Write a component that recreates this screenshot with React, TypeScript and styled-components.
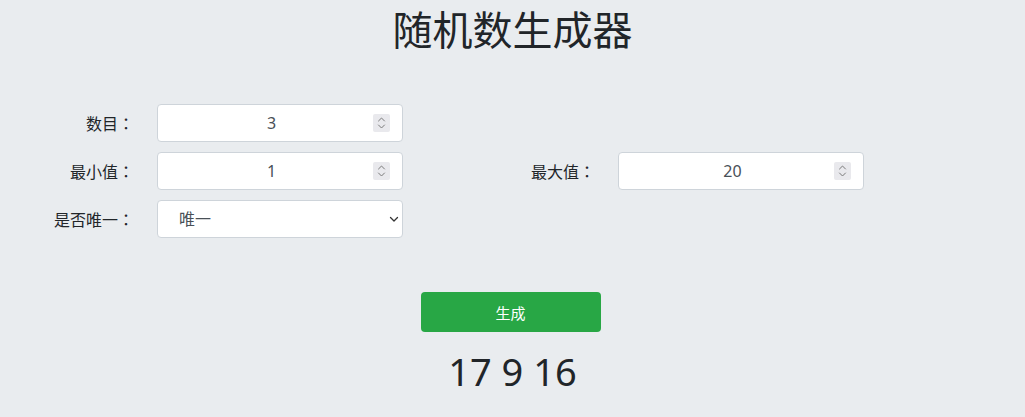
import React, { useState } from "react";
import styled, { createGlobalStyle } from "styled-components";

const GlobalStyle = createGlobalStyle`
  html, body {
    margin: 0;
    padding: 0;
    background: #e9ecef;
  }
  body {
    font-family: "Noto Sans", "Noto Sans CJK SC", sans-serif;
    color: #212529;
  }
  input[type="number"]::-webkit-inner-spin-button,
  input[type="number"]::-webkit-outer-spin-button {
    -webkit-appearance: none;
    margin: 0;
  }
`;

const Page = styled.div`
  display: flex;
  flex-direction: column;
  align-items: stretch;
  padding-top: 6px;
`;

const Title = styled.h1`
  margin: 0;
  text-align: center;
  font-size: 40px;
  font-weight: 400;
  line-height: 48px;
  color: #212529;
`;

const Form = styled.div`
  display: grid;
  grid-template-columns: 134px 246px 169px 246px;
  column-gap: 23px;
  row-gap: 10px;
  margin-top: 50px;
`;

const Label = styled.label`
  align-self: center;
  text-align: right;
  font-size: 16px;
  line-height: 24px;
  color: #212529;
  white-space: nowrap;
`;

const Colon = styled.span`
  font-family: "Noto Sans CJK JP", sans-serif;
`;

const FieldWrap = styled.div`
  position: relative;
  height: 38px;
`;

const NumberInput = styled.input`
  box-sizing: border-box;
  width: 100%;
  height: 38px;
  border: 1px solid #ced4da;
  border-radius: 4px;
  background: #fff;
  text-align: center;
  font-family: "Noto Sans", "Noto Sans CJK SC", sans-serif;
  font-size: 16px;
  color: #495057;
  padding: 0 29px 0 12px;
  outline: none;
  -moz-appearance: textfield;
`;

const Spinner = styled.span`
  position: absolute;
  right: 13px;
  top: 10px;
  width: 17px;
  height: 18px;
  background: #e9e9ed;
  border-radius: 2px;
  pointer-events: none;
  display: flex;
  align-items: center;
  justify-content: center;
`;

const Select = styled.select`
  box-sizing: border-box;
  width: 100%;
  height: 38px;
  border: 1px solid #ced4da;
  border-radius: 4px;
  background: #fff;
  font-family: "Noto Sans", "Noto Sans CJK SC", sans-serif;
  font-size: 16px;
  color: #495057;
  padding: 0 30px 0 21px;
  appearance: none;
  -webkit-appearance: none;
  outline: none;
`;

const Chevron = styled.span`
  position: absolute;
  right: 4px;
  top: 15px;
  width: 10px;
  height: 8px;
  pointer-events: none;
  display: flex;
`;

const Actions = styled.div`
  display: flex;
  flex-direction: column;
  align-items: center;
  margin-top: 54px;
`;

const GenerateButton = styled.button`
  width: 180px;
  height: 40px;
  margin-right: 4px;
  border: none;
  border-radius: 4px;
  background: #28a745;
  color: #fff;
  font-family: "Noto Sans", "Noto Sans CJK SC", sans-serif;
  font-size: 15px;
  cursor: pointer;
`;

const Result = styled.div`
  margin-top: 16px;
  font-size: 38px;
  line-height: 46px;
  color: #212529;
  text-align: center;
`;

const SpinIcon = () => (
  <svg width="9" height="14" viewBox="0 0 9 14" fill="none" stroke="#7a7a7a" strokeWidth="1" strokeLinecap="round" strokeLinejoin="round">
    <path d="M1.5 5 L4.5 2 L7.5 5" />
    <path d="M1.5 9 L4.5 12 L7.5 9" />
  </svg>
);

const DownIcon = () => (
  <svg width="10" height="8" viewBox="0 0 10 8" fill="none" stroke="#333" strokeWidth="1.3" strokeLinecap="round" strokeLinejoin="round">
    <path d="M1.5 2.5 L5 6 L8.5 2.5" />
  </svg>
);

const NumberField = ({ value, onChange }: { value: number; onChange: (v: number) => void }) => (
  <FieldWrap>
    <NumberInput type="number" value={value} onChange={(e) => onChange(Number(e.target.value))} />
    <Spinner>
      <SpinIcon />
    </Spinner>
  </FieldWrap>
);

const FieldLabel = ({ text }: { text: string }) => (
  <Label>
    {text}
    <Colon>：</Colon>
  </Label>
);

const Empty = styled.div``;

export default function App() {
  const [count, setCount] = useState(3);
  const [min, setMin] = useState(1);
  const [max, setMax] = useState(20);
  const [unique, setUnique] = useState("unique");
  const [result, setResult] = useState<number[]>([17, 9, 16]);

  const generate = () => {
    const lo = Math.min(min, max);
    const hi = Math.max(min, max);
    const out: number[] = [];
    const range = hi - lo + 1;
    const n = unique === "unique" ? Math.min(count, range) : count;
    while (out.length < n) {
      const v = lo + Math.floor(Math.random() * range);
      if (unique === "unique" && out.includes(v)) continue;
      out.push(v);
    }
    setResult(out);
  };

  return (
    <>
      <GlobalStyle />
      <Page>
        <Title>随机数生成器</Title>
        <Form>
          <FieldLabel text="数目" />
          <NumberField value={count} onChange={setCount} />
          <Empty />
          <Empty />

          <FieldLabel text="最小值" />
          <NumberField value={min} onChange={setMin} />
          <FieldLabel text="最大值" />
          <NumberField value={max} onChange={setMax} />

          <FieldLabel text="是否唯一" />
          <FieldWrap>
            <Select value={unique} onChange={(e) => setUnique(e.target.value)}>
              <option value="unique">唯一</option>
              <option value="repeat">可重复</option>
            </Select>
            <Chevron>
              <DownIcon />
            </Chevron>
          </FieldWrap>
        </Form>
        <Actions>
          <GenerateButton onClick={generate}>生成</GenerateButton>
          <Result>{result.join(" ")}</Result>
        </Actions>
      </Page>
    </>
  );
}
